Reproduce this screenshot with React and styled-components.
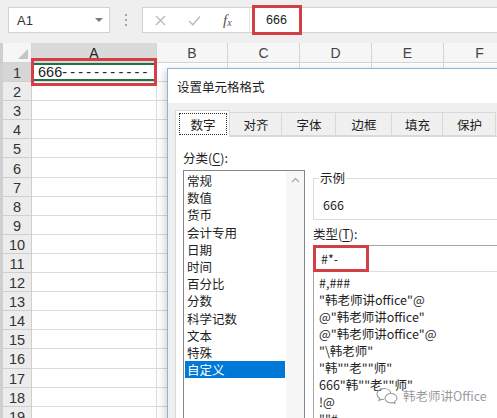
import styled, { createGlobalStyle } from "styled-components"

const GlobalStyle = createGlobalStyle`
    html, body {
        margin: 0;
        padding: 0;
        background: #fff;
    }
    body {
        width: 497px;
        height: 418px;
        overflow: hidden;
    }
`

const Screen = styled.div`
    position: relative;
    width: 497px;
    height: 418px;
    overflow: hidden;
    background: #fff;
    font-family: "Liberation Sans", Arial, sans-serif;
`

const TopBar = styled.div`
    height: 43px;
    box-sizing: border-box;
    padding: 7px 0 0 8px;
    background: #efefef;
    display: flex;
    align-items: flex-start;
`
const NameBox = styled.div`
    width: 102px;
    height: 26px;
    box-sizing: border-box;
    flex-shrink: 0;
    background: #fff;
    border: 1px solid #d2d2d2;
    display: flex;
    align-items: center;
    justify-content: space-between;
    padding: 0 6px 0 8px;
    font-size: 13px;
    color: #333;
`
const Caret = styled.span`
    width: 0;
    height: 0;
    border-left: 4px solid transparent;
    border-right: 4px solid transparent;
    border-top: 4px solid #7a7a7a;
`
const Dots = styled.div`
    width: 32px;
    height: 26px;
    flex-shrink: 0;
    display: flex;
    flex-direction: column;
    align-items: center;
    justify-content: center;
    gap: 3px;
    span {
        width: 2px;
        height: 2px;
        background: #a8a8a8;
    }
`
const FormulaBox = styled.div`
    flex: 1;
    height: 26px;
    box-sizing: border-box;
    background: #fff;
    border: 1px solid #d2d2d2;
    border-right: none;
    display: flex;
    align-items: center;
`
const FormulaIcons = styled.div`
    width: 107px;
    height: 100%;
    flex-shrink: 0;
    display: flex;
    align-items: center;
    padding-left: 12px;
    gap: 22px;
    box-sizing: border-box;
    border-right: 1px solid #e2e2e2;
`
const Fx = styled.span`
    font-family: "Liberation Serif", "Times New Roman", serif;
    font-style: italic;
    font-size: 15px;
    color: #555;
    sub {
        font-size: 10px;
        vertical-align: -1px;
    }
`
const FormulaInput = styled.div`
    flex: 1;
    height: 100%;
    display: flex;
    align-items: center;
    padding-left: 2px;
`
const RedMark = styled.div`
    width: ${p => p.$w}px;
    height: ${p => p.$h}px;
    margin: ${p => p.$m};
    flex-shrink: 0;
    box-sizing: border-box;
    border: 3px solid #d23f44;
    display: flex;
    align-items: center;
    padding-left: ${p => p.$pad}px;
    font-size: ${p => p.$fs}px;
    color: #222;
`

const Sheet = styled.div`
    display: grid;
    grid-template-columns: 29px 125px 71px 72px 72px 72px 72px;
    grid-template-rows: 20px;
    grid-auto-rows: 19.1px;
    border-left: 3px solid #cfcfcf;
    font-size: 14.5px;
    color: #222;
`
const Corner = styled.div`
    position: relative;
    background: #f6f6f6;
    border-right: 1px solid #d4d4d4;
    border-bottom: 1px solid #d4d4d4;
    box-sizing: border-box;
    display: flex;
    align-items: flex-end;
    justify-content: flex-end;
    padding: 0 3px 3px 0;
`
const ColHeader = styled.div`
    background: ${p => (p.$selected ? "#dadada" : "#f6f6f6")};
    color: ${p => (p.$selected ? "#222" : "#444")};
    border-right: 1px solid #d4d4d4;
    border-bottom: 1px solid #d4d4d4;
    box-sizing: border-box;
    display: flex;
    align-items: center;
    justify-content: center;
    font-size: 14px;
`
const RowHeader = styled.div`
    background: ${p => (p.$selected ? "#d6d6d6" : "#ececec")};
    color: #333;
    border-right: 1px solid #cfcfcf;
    border-bottom: 1px solid #cfcfcf;
    box-sizing: border-box;
    display: flex;
    align-items: center;
    justify-content: center;
    padding-top: 2px;
`
const Cell = styled.div`
    border-right: 1px solid #dadada;
    border-bottom: 1px solid #dadada;
    box-sizing: border-box;
`
const ActiveCell = styled(Cell)`
    position: relative;
    display: flex;
    align-items: flex-end;
    padding: 0 0 1px 6px;
    box-shadow: inset 0 0 0 2px #217346;
    white-space: nowrap;
    z-index: 1;
    &::after {
        content: "";
        position: absolute;
        top: -5px;
        bottom: -5px;
        left: -1px;
        right: -1px;
        border: 3px solid #d23f44;
    }
`
const Dashes = styled.span`
    letter-spacing: 3.2px;
`

const Dialog = styled.div`
    position: absolute;
    left: 167px;
    top: 68px;
    width: 360px;
    height: 380px;
    background: #f0f0f0;
    border: 1px solid #8cb4e0;
    box-shadow: -2px 2px 8px rgba(0, 0, 0, 0.18);
    font-family: "Noto Sans CJK SC", "Noto Sans", sans-serif;
    font-size: 12.5px;
    color: #1e1e1e;
    z-index: 2;
`
const TitleBar = styled.div`
    height: 34px;
    background: #fff;
    display: flex;
    align-items: center;
    padding-left: 9px;
    font-size: 12.5px;
`
const Body = styled.div`
    padding: 7px 0 0 7px;
`
const TabRow = styled.div`
    display: flex;
    align-items: flex-end;
    height: 26px;
    position: relative;
    z-index: 1;
`
const Tab = styled.div`
    width: ${p => p.$w}px;
    height: ${p => (p.$active ? 27 : 24)}px;
    box-sizing: border-box;
    margin-bottom: ${p => (p.$active ? -1 : 0)}px;
    background: ${p => (p.$active ? "#fff" : "#f0f0f0")};
    border: 1px solid #d9d9d9;
    border-bottom: ${p => (p.$active ? "none" : "1px solid #d9d9d9")};
    border-left: ${p => (p.$first || p.$active ? "1px solid #d9d9d9" : "none")};
    display: flex;
    align-items: center;
    justify-content: center;
    padding: 2px 2px 2px 3px;
`
const FocusRing = styled.span`
    flex: 1;
    align-self: stretch;
    display: flex;
    align-items: center;
    justify-content: center;
    border: 1px dotted #333;
`
const Panel = styled.div`
    background: #fff;
    border: 1px solid #d9d9d9;
    height: 320px;
    box-sizing: border-box;
    padding: 12px 0 0 7px;
    display: flex;
    gap: 8px;
`
const LeftCol = styled.div`
    width: 122px;
    flex-shrink: 0;
`
const Label = styled.div`
    line-height: 18px;
    u {
        text-decoration: underline;
        text-underline-offset: 2px;
    }
`
const ListBox = styled.div`
    margin-top: 3px;
    height: 270px;
    box-sizing: border-box;
    border: 1px solid #828790;
    display: flex;
`
const Items = styled.div`
    flex: 1;
    padding: 1px;
`
const Item = styled.div`
    height: 17.2px;
    line-height: 17.2px;
    padding-left: 2px;
    white-space: nowrap;
    background: ${p => (p.$selected ? "#0078d7" : "transparent")};
    color: ${p => (p.$selected ? "#fff" : "#1e1e1e")};
`
const ScrollBar = styled.div`
    width: 18px;
    background: #f7f7f7;
    display: flex;
    justify-content: center;
    padding-top: 6px;
    box-sizing: border-box;
`
const RightCol = styled.div`
    flex: 1;
    margin-top: 20px;
`
const Group = styled.fieldset`
    margin: 0;
    padding: 0 0 5px 0;
    border: 1px solid #dcdcdc;
    min-width: 0;
`
const Legend = styled.legend`
    margin-left: 5px;
    padding: 0 1px;
    line-height: 18px;
`
const Sample = styled.div`
    padding: 9px 0 0 9px;
    line-height: 18px;
`
const TypeLabel = styled(Label)`
    margin-top: 5px;
`
const TypeInput = styled.div`
    margin-top: 2px;
    height: 27px;
    box-sizing: border-box;
    border: 1px solid #a6a6a6;
    display: flex;
    align-items: center;
`
const TypeList = styled.div`
    margin-top: -1px;
    height: 160px;
    border: 1px solid #a6a6a6;
    border-top: 1px solid #dedede;
    padding: 2px 0 0 5px;
`
const TypeItem = styled.div`
    height: 17px;
    line-height: 17px;
    white-space: nowrap;
`

const Watermark = styled.div`
    position: absolute;
    left: 376px;
    top: 386px;
    display: flex;
    align-items: center;
    gap: 5px;
    z-index: 3;
    font-family: "Noto Sans CJK SC", "Noto Sans", sans-serif;
    font-size: 12.5px;
    color: rgba(120, 120, 120, 0.75);
    text-shadow: 0 0 2px #fff;
`

const categories = ["常规", "数值", "货币", "会计专用", "日期", "时间", "百分比", "分数", "科学记数", "文本", "特殊", "自定义"]
const tabs = [["数字", 55], ["对齐", 52], ["字体", 54], ["边框", 56], ["填充", 51], ["保护", 53]]
const types = [
    "#,###",
    "\"韩老师讲office\"@",
    "@\"韩老师讲office\"",
    "@\"韩老师讲office\"@",
    "\"\\韩老师\"",
    "\"韩\"\"老\"\"师\"",
    "666\"韩\"\"老\"\"师\"",
    "!@",
    "\"\"#",
]
const cols = ["A", "B", "C", "D", "E", "F"]

const App = () => {
    const rows = Array.from({ length: 19 }, (_, i) => i + 1)
    return (
        <Screen>
            <GlobalStyle />
            <TopBar>
                <NameBox>
                    A1
                    <Caret />
                </NameBox>
                <Dots>
                    <span />
                    <span />
                    <span />
                </Dots>
                <FormulaBox>
                    <FormulaIcons>
                        <svg width="11" height="11" viewBox="0 0 11 11">
                            <path d="M1 1 L10 10 M10 1 L1 10" stroke="#b8b8b8" strokeWidth="1.3" fill="none" />
                        </svg>
                        <svg width="13" height="11" viewBox="0 0 13 11">
                            <path d="M1 6 L4.8 9.8 L12 1.5" stroke="#b8b8b8" strokeWidth="1.4" fill="none" />
                        </svg>
                        <Fx>
                            f<sub>x</sub>
                        </Fx>
                    </FormulaIcons>
                    <FormulaInput>
                        <RedMark $w={50} $h={30} $m="-2px 0" $pad={11} $fs={12.5}>
                            666
                        </RedMark>
                    </FormulaInput>
                </FormulaBox>
            </TopBar>

            <Sheet>
                <Corner>
                    <svg width="10" height="10" viewBox="0 0 10 10">
                        <polygon points="10,0 10,10 0,10" fill="#c4c4c4" />
                    </svg>
                </Corner>
                {cols.map(c => (
                    <ColHeader key={c} $selected={c === "A"}>
                        {c}
                    </ColHeader>
                ))}
                {rows.map(r => [
                    <RowHeader key={"h" + r} $selected={r === 1}>
                        {r}
                    </RowHeader>,
                    ...cols.map(c =>
                        r === 1 && c === "A" ? (
                            <ActiveCell key={c + r}>
                                666<Dashes>-----------</Dashes>
                            </ActiveCell>
                        ) : (
                            <Cell key={c + r} />
                        )
                    ),
                ])}
            </Sheet>

            <Dialog>
                <TitleBar>设置单元格格式</TitleBar>
                <Body>
                    <TabRow>
                        {tabs.map(([t, w], i) => (
                            <Tab key={t} $w={w} $active={i === 0} $first={i === 0}>
                                {i === 0 ? <FocusRing>{t}</FocusRing> : t}
                            </Tab>
                        ))}
                    </TabRow>
                    <Panel>
                        <LeftCol>
                            <Label>
                                分类(<u>C</u>):
                            </Label>
                            <ListBox>
                                <Items>
                                    {categories.map(c => (
                                        <Item key={c} $selected={c === "自定义"}>
                                            {c}
                                        </Item>
                                    ))}
                                </Items>
                                <ScrollBar>
                                    <svg width="9" height="6" viewBox="0 0 9 6">
                                        <path d="M1 5 L4.5 1.5 L8 5" stroke="#a6a6a6" strokeWidth="1.2" fill="none" />
                                    </svg>
                                </ScrollBar>
                            </ListBox>
                        </LeftCol>
                        <RightCol>
                            <Group>
                                <Legend>示例</Legend>
                                <Sample>666</Sample>
                            </Group>
                            <TypeLabel>
                                类型(<u>T</u>):
                            </TypeLabel>
                            <TypeInput>
                                <RedMark $w={56} $h={27} $m="-1px" $pad={5} $fs={12.5}>
                                    #*-
                                </RedMark>
                            </TypeInput>
                            <TypeList>
                                {types.map(t => (
                                    <TypeItem key={t}>{t}</TypeItem>
                                ))}
                            </TypeList>
                        </RightCol>
                    </Panel>
                </Body>
            </Dialog>

            <Watermark>
                <svg width="22" height="17" viewBox="0 0 22 17">
                    <path
                        d="M8 1.5 C4 1.5 1 4 1 7 C1 8.8 2 10.3 3.6 11.3 L3 13.5 L5.6 12.2 C6.4 12.4 7.2 12.5 8 12.5"
                        stroke="#9a9a9a"
                        strokeWidth="1.1"
                        fill="none"
                    />
                    <path
                        d="M8 1.5 C11.6 1.5 14.5 3.6 14.9 6.4"
                        stroke="#9a9a9a"
                        strokeWidth="1.1"
                        fill="none"
                    />
                    <path
                        d="M15 6.5 C11.7 6.5 9 8.6 9 11.2 C9 13.8 11.7 15.9 15 15.9 C15.7 15.9 16.3 15.8 16.9 15.6 L19 16.6 L18.5 14.8 C20 13.9 21 12.6 21 11.2 C21 8.6 18.3 6.5 15 6.5 Z"
                        stroke="#9a9a9a"
                        strokeWidth="1.1"
                        fill="none"
                    />
                </svg>
                韩老师讲Office
            </Watermark>
        </Screen>
    )
}

export default App
